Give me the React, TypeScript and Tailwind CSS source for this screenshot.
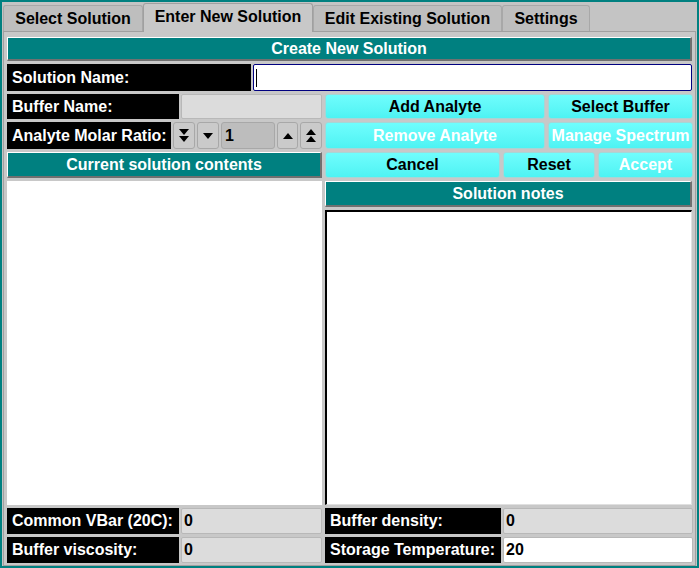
import type { ReactNode } from "react";

const font = { fontFamily: '"Liberation Sans", Arial, sans-serif' };

function Label({ children, className = "" }: { children: ReactNode; className?: string }) {
    return (
        <div className={`flex items-center bg-black pl-[5px] text-white font-bold text-[16px] whitespace-nowrap ${className}`}>
            {children}
        </div>
    );
}

function Field({ value = "", white = false, className = "" }: { value?: string; white?: boolean; className?: string }) {
    return (
        <div
            className={`flex items-center rounded-[2px] border border-[#b8b8b8] pl-[2px] text-[16px] font-bold text-black ${
                white ? "bg-white" : "bg-[#dcdcdc]"
            } ${className}`}
        >
            {value}
        </div>
    );
}

function Header({ children, className = "" }: { children: ReactNode; className?: string }) {
    return (
        <div
            className={`flex items-center justify-center border-t border-l border-white border-b-2 border-r-2 border-b-[#707070] border-r-[#707070] bg-[#008080] text-white font-bold text-[16px] ${className}`}
        >
            {children}
        </div>
    );
}

function Btn({ children, disabled = false, className = "" }: { children: ReactNode; disabled?: boolean; className?: string }) {
    return (
        <button
            className={`flex items-center justify-center rounded-[3px] border border-[#a6d6d6] bg-gradient-to-b from-[#6ffdfd] to-[#4df3f3] text-[16px] font-bold whitespace-nowrap ${
                disabled ? "text-white" : "text-black"
            } ${className}`}
        >
            {children}
        </button>
    );
}

function Tri({ up }: { up?: boolean }) {
    return (
        <svg width="10" height="6" viewBox="0 0 10 6">
            <polygon points={up ? "0,6 10,6 5,0" : "0,0 10,0 5,6"} fill="#000" />
        </svg>
    );
}

function DoubleTri({ up }: { up?: boolean }) {
    return (
        <svg width="12" height="13" viewBox="0 0 12 13">
            {up ? (
                <>
                    <polygon points="1,6 11,6 6,0" fill="#000" />
                    <polygon points="1,13 11,13 6,7" fill="#000" />
                </>
            ) : (
                <>
                    <polygon points="1,0 11,0 6,6" fill="#000" />
                    <polygon points="1,7 11,7 6,13" fill="#000" />
                </>
            )}
        </svg>
    );
}

function SpinBtn({ children, className = "" }: { children: ReactNode; className?: string }) {
    return (
        <div className={`flex items-center justify-center rounded-[3px] border border-[#a8a8a8] bg-[#cacaca] ${className}`}>
            {children}
        </div>
    );
}

export default function App() {
    const tabs = ["Select Solution", "Enter New Solution", "Edit Existing Solution", "Settings"];
    const widths = ["w-[140px]", "w-[170px]", "w-[189px]", "w-[88px]"];

    return (
        <div style={font} className="flex h-[568px] w-[699px] flex-col border-2 border-[#008080] bg-[#c4c4c4] px-px pt-px">
            {/* Tabs */}
            <div className="flex h-[29px] items-end">
                {tabs.map((t, i) =>
                    i === 1 ? (
                        <div
                            key={t}
                            className={`relative z-10 flex h-[29px] ${widths[i]} items-center justify-center rounded-t-[3px] border border-b-0 border-[#a0a0a0] bg-[#c8c8c8] pb-[2px] text-[16px] font-bold`}
                        >
                            {t}
                        </div>
                    ) : (
                        <div
                            key={t}
                            className={`flex h-[27px] ${widths[i]} items-center justify-center rounded-t-[3px] border border-b-0 border-[#a8a8a8] bg-[#bebebe] text-[16px] font-bold`}
                        >
                            {t}
                        </div>
                    )
                )}
            </div>

            {/* Pane */}
            <div className="-mt-px flex flex-1 flex-col gap-[3px] border border-[#a0a0a0] bg-[#c8c8c8] pl-[3px] pr-[3px] pt-[5px] pb-[2px]">
                <Header className="h-[24px]">Create New Solution</Header>

                <div className="flex h-[27px] gap-[2px]">
                    <Label className="w-[244px]">Solution Name:</Label>
                    <div className="flex flex-1 items-center rounded-[2px] border border-[#000080] bg-white pl-[2px]">
                        <div className="h-[18px] w-px bg-black" />
                    </div>
                </div>

                <div className="grid grid-cols-[315px_368px] gap-x-[3px] gap-y-[3px]">
                    {/* row: buffer name */}
                    <div className="flex h-[25px] gap-[2px]">
                        <Label className="w-[172px]">Buffer Name:</Label>
                        <Field className="flex-1" />
                    </div>
                    <div className="flex h-[25px] gap-[3px]">
                        <Btn className="w-[220px]">Add Analyte</Btn>
                        <Btn className="flex-1">Select Buffer</Btn>
                    </div>

                    {/* row: molar ratio */}
                    <div className="flex h-[27px] gap-[2px]">
                        <Label className="w-[166px]">Analyte Molar Ratio:</Label>
                        <SpinBtn className="w-[22px]">
                            <DoubleTri />
                        </SpinBtn>
                        <SpinBtn className="w-[22px]">
                            <Tri />
                        </SpinBtn>
                        <div className="flex w-[55px] items-center rounded-[3px] border border-[#a8a8a8] bg-[#bdbdbd] pl-[3px] text-[16px] font-bold">
                            1
                        </div>
                        <SpinBtn className="w-[21px]">
                            <Tri up />
                        </SpinBtn>
                        <SpinBtn className="w-[22px]">
                            <DoubleTri up />
                        </SpinBtn>
                    </div>
                    <div className="flex h-[27px] gap-[3px]">
                        <Btn disabled className="w-[220px]">
                            Remove Analyte
                        </Btn>
                        <Btn disabled className="flex-1">
                            Manage Spectrum
                        </Btn>
                    </div>

                    {/* row: contents header + actions */}
                    <Header className="h-[26px]">Current solution contents</Header>
                    <div className="flex h-[26px] gap-[3px]">
                        <Btn className="w-[175px]">Cancel</Btn>
                        <Btn className="w-[92px]">Reset</Btn>
                        <Btn disabled className="flex-1">
                            Accept
                        </Btn>
                    </div>
                </div>

                {/* main area */}
                <div className="flex flex-1 gap-[3px]">
                    <div className="w-[315px] bg-white" />
                    <div className="flex flex-1 flex-col gap-[3px]">
                        <Header className="h-[26px]">Solution notes</Header>
                        <div className="flex-1 border-t-2 border-l-2 border-black border-r border-b border-r-[#e0e0e0] border-b-[#e0e0e0] bg-white" />
                    </div>
                </div>

                {/* bottom rows */}
                <div className="grid grid-cols-[315px_368px] gap-x-[3px] gap-y-[3px]">
                    <div className="flex h-[26px] gap-[2px]">
                        <Label className="w-[172px]">Common VBar (20C):</Label>
                        <Field className="flex-1" value="0" />
                    </div>
                    <div className="flex h-[26px] gap-[2px]">
                        <Label className="w-[176px]">Buffer density:</Label>
                        <Field className="flex-1" value="0" />
                    </div>
                    <div className="flex h-[26px] gap-[2px]">
                        <Label className="w-[172px]">Buffer viscosity:</Label>
                        <Field className="flex-1" value="0" />
                    </div>
                    <div className="flex h-[26px] gap-[2px]">
                        <Label className="w-[176px]">Storage Temperature:</Label>
                        <Field className="flex-1" value="20" white />
                    </div>
                </div>
            </div>
        </div>
    );
}
